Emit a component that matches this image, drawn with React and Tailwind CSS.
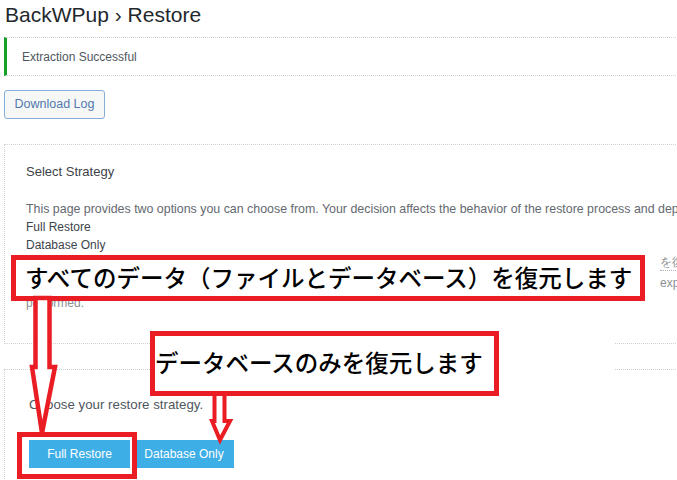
const sans = "font-['Liberation_Sans',Arial,sans-serif]";
const jp = "font-['Noto_Sans_CJK_JP','Noto_Sans',sans-serif]";

const Arrows = () => (
  <svg
    className="absolute left-0 top-0 pointer-events-none"
    width="677"
    height="480"
    viewBox="0 0 677 480"
  >
    {/* long arrow down to the Full Restore button */}
    <polygon
      points="35.5,298 49.5,298 49.5,367 55,367 42,433 32,367 35.5,367"
      fill="#fff"
      stroke="#ea1c24"
      strokeWidth="4.5"
      strokeLinejoin="miter"
    />
    {/* short arrow down to Database Only */}
    <polygon
      points="214.5,394 224.5,394 224.5,421 230,421 220,440 212,421 214.5,421"
      fill="#fff"
      stroke="#ea1c24"
      strokeWidth="4"
      strokeLinejoin="miter"
    />
  </svg>
);

const Note = ({ className, children }) => (
  <div
    className={`absolute border-[5px] border-[#ea1c24] bg-white text-black text-[23.5px] font-medium ${jp} ${className}`}
  >
    {children}
  </div>
);

export default function App() {
  return (
    <div
      className={`relative w-[677px] h-[480px] overflow-hidden bg-white ${sans}`}
    >
      <div className="pl-1">
        <h1 className="pl-px text-[21px] leading-[30px] text-[#23282d]">
          BackWPup › Restore
        </h1>

        <div className="mt-[7px] flex h-[39px] w-[720px] items-center border-y border-dotted border-[#cfcfd4] border-l-[3px] border-l-[#16a02b] [border-left-style:solid] pl-[15px] text-[12px] text-[#50575e]">
          Extraction Successful
        </div>

        <button className="mt-[14px] h-[29px] w-[101px] rounded-[3px] border border-[#86aedb] bg-[#f6f7f7] text-[12.5px] text-[#5279ad]">
          Download Log
        </button>

        <div className="mt-[25px] h-[200px] w-[720px] border border-dotted border-[#cfcfd4] pl-[21px] pt-[18px]">
          <h2 className="text-[13px] leading-[18px] text-[#3c434a]">
            Select Strategy
          </h2>
          <p className="mt-[19px] whitespace-nowrap text-[12.4px] leading-[18px] text-[#646970]">
            This page provides two options you can choose from. Your decision
            affects the behavior of the restore process and depends on what you
            need.
          </p>
          <div className="text-[12px] leading-[18px] text-[#3c434a]">
            Full Restore
          </div>
          <div className="text-[12px] leading-[18px] text-[#3c434a]">
            Database Only
          </div>
          <div className="flex whitespace-nowrap text-[11.5px] leading-[16px] text-[#8c8f94]">
            <span className="inline-block w-[634px] shrink-0 overflow-hidden">
              Full Restore will restore your files and your database.
            </span>
            <span className="border-b border-dotted border-[#b0b0b8]">
              を復元します
            </span>
          </div>
          <div className="mt-[3px] flex whitespace-nowrap text-[12px] leading-[18px] text-[#8c8f94]">
            <span className="inline-block w-[634px] shrink-0 overflow-hidden">
              Database Only will restore only the database tables, when no
              file changes are
            </span>
            <span>expected</span>
          </div>
          <div className="mt-[2px] text-[12px] leading-[18px] text-[#8c8f94]">
            performed.
          </div>
        </div>

        <div className="mt-[25px] h-[140px] w-[720px] border border-dotted border-[#cfcfd4] pl-[24px] pt-[26px]">
          <p className="text-[13.3px] leading-[18px] text-[#50575e]">
            Choose your restore strategy.
          </p>
          <div className="mt-[26px] flex gap-[4px]">
            <button className="h-[28px] w-[101px] bg-[#3eaee6] text-[12px] text-white">
              Full Restore
            </button>
            <button className="h-[28px] w-[100px] bg-[#3eaee6] text-[12px] text-white">
              Database Only
            </button>
          </div>
        </div>
      </div>

      <Note className="left-[11px] top-[255px] flex h-[46px] w-[634px] items-center pl-[9px] leading-none">
        すべてのデータ（ファイルとデータベース）を復元します
      </Note>

      <div className="absolute left-[150px] top-[329px] h-[70px] w-[464px] bg-white" />
      <Note className="left-[150px] top-[331px] flex h-[65px] w-[349px] items-center pb-[2px] leading-none">
        データベースのみを復元します
      </Note>

      <div className="absolute left-[17px] top-[432px] h-[47px] w-[120px] border-[5px] border-[#ea1c24]" />

      <Arrows />
    </div>
  );
}
